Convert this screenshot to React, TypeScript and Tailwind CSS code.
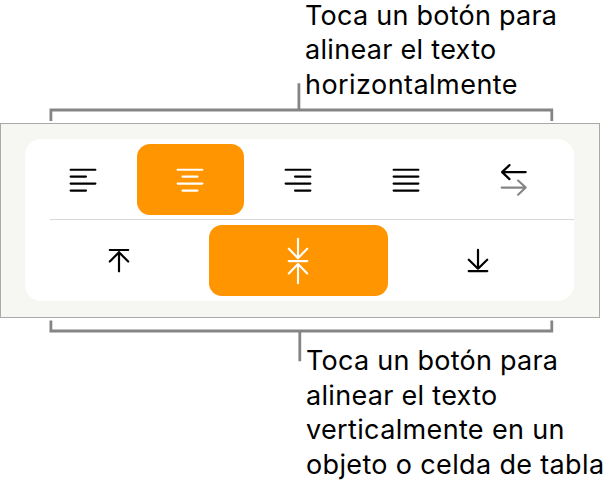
import type { ReactNode } from "react";

function Icon({ children }: { children: ReactNode }) {
  return (
    <svg
      width="40"
      height="71"
      viewBox="-20 -35.5 40 71"
      fill="none"
      stroke="currentColor"
      strokeWidth="2.1"
      strokeLinecap="round"
      strokeLinejoin="round"
      aria-hidden="true"
    >
      {children}
    </svg>
  );
}

const horizontal: { label: string; icon: ReactNode; selected?: boolean }[] = [
  { label: "Izquierda", icon: <path d="M-12.4-9.8H12.4M-12.4-2.9H3M-12.4 4.1H12.4M-12.4 11.1H3" /> },
  { label: "Centro", selected: true, icon: <path d="M-12.4-9.8H12.4M-7.5-2.9H7.5M-12.4 4.1H12.4M-7.5 11.1H7.5" /> },
  { label: "Derecha", icon: <path d="M-12.4-9.8H12.4M-3-2.9H12.4M-12.4 4.1H12.4M-3 11.1H12.4" /> },
  { label: "Justificar", icon: <path d="M-12.4-9.8H12.4M-12.4-2.9H12.4M-12.4 4.1H12.4M-12.4 11.1H12.4" /> },
  {
    label: "Dirección",
    icon: (
      <>
        <path strokeWidth="2.2" d="M12.7-7.4H-10.9M-3.5-14.4L-10.9-7.4L-3.5-.4" />
        <path className="stroke-[#858585]" d="M-11.3 8.1H12.5M5.1 1L12.7 8.1L5.1 15.2" />
      </>
    ),
  },
];

const vertical: { label: string; icon: ReactNode; selected?: boolean }[] = [
  { label: "Arriba", icon: <path strokeWidth="2.2" d="M-9.2-10.5H9.2M0-8.5V10.8M-9.2 1L0-8.2L9.2 1" /> },
  { label: "Medio", selected: true, icon: <path d="M-9.3.6H9.3M0-21.6V-2.6M-9.2-11.8L0-2.3L9.2-11.8M0 22.8V3.8M-9.2 13L0 3.5L9.2 13" /> },
  { label: "Abajo", icon: <path strokeWidth="2.2" d="M-9.3 10.6H9.3M0-10.6V8.2M-9.2-.8L0 8.2L9.2-.8" /> },
];

function Cell({ label, icon, selected }: { label: string; icon: ReactNode; selected?: boolean }) {
  return (
    <button
      type="button"
      aria-label={label}
      className={
        selected
          ? "flex h-[71px] items-center justify-center rounded-[13px] bg-[#ff9500] text-white"
          : "flex h-[71px] items-center justify-center text-black"
      }
    >
      <Icon>{icon}</Icon>
    </button>
  );
}

export default function App() {
  return (
    <main className="h-[491px] w-[611px] bg-white font-['Inter',sans-serif] text-[27px] leading-[34.7px] whitespace-nowrap text-black">
      <section className="flex h-[123px]">
        <svg width="611" height="123" viewBox="0 0 611 123" fill="none" stroke="#858585" strokeWidth="2.8" className="shrink-0" aria-hidden="true">
          <path d="M50.9 121V110H551.8V121M298.9 83.3V110" />
        </svg>
        <p className="-mt-[1.5px] -ml-[306px] shrink-0">
          <span className="block tracking-[0.25px]">Toca un botón para</span>
          <span className="block tracking-[0.3px]">alinear el texto</span>
          <span className="block tracking-[0.45px]">horizontalmente</span>
        </p>
      </section>

      <section className="h-[195px] w-[600px] border border-[#aaa] bg-[#f6f6f2] pt-[15px] pl-6">
        <div className="h-[162px] w-[549px] rounded-[16px] bg-white pt-[5px]">
          <div className="ml-1 grid w-[538px] grid-cols-5">
            {horizontal.map((c) => (
              <Cell key={c.label} {...c} />
            ))}
          </div>
          <div className="mt-1 mb-[5px] ml-[25px] h-px bg-[#d8d8d8]" />
          <div className="ml-1 grid w-[539px] grid-cols-3">
            {vertical.map((c) => (
              <Cell key={c.label} {...c} />
            ))}
          </div>
        </div>
      </section>

      <section className="flex h-[173px]">
        <svg width="611" height="60" viewBox="0 0 611 60" fill="none" stroke="#858585" strokeWidth="2.8" className="shrink-0" aria-hidden="true">
          <path d="M50.9 2.5V13H551.8V2.5M299.8 43.2V13" />
        </svg>
        <p className="mt-[26px] -ml-[305px] shrink-0">
          <span className="block tracking-[0.25px]">Toca un botón para</span>
          <span className="block tracking-[0.3px]">alinear el texto</span>
          <span className="block tracking-[0.35px]">verticalmente en un</span>
          <span className="block tracking-[0.35px]">objeto o celda de tabla</span>
        </p>
      </section>
    </main>
  );
}
